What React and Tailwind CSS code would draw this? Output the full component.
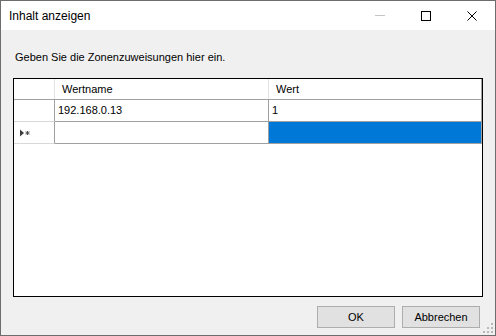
export default function App() {
  return (
    <div
      className="relative w-[496px] h-[336px] flex flex-col border border-[#6d6d6d] bg-[#f0f0f0] text-black"
      style={{ fontFamily: '"Liberation Sans", Arial, sans-serif' }}
    >
      {/* title bar */}
      <div className="h-[29px] bg-white flex items-center shrink-0">
        <span className="pl-[8px] text-[12px] leading-none">Inhalt anzeigen</span>
        <div className="flex-1" />
        <div className="w-[46px] h-full flex items-center justify-center">
          <div className="w-[10px] h-px bg-[#c4c4c4]" />
        </div>
        <div className="w-[46px] h-full flex items-center justify-center">
          <div className="w-[10px] h-[10px] border border-black" />
        </div>
        <div className="w-[46px] h-full flex items-center justify-center">
          <svg width="10" height="10" viewBox="0 0 10 10">
            <path d="M0.5 0.5 L9.5 9.5 M9.5 0.5 L0.5 9.5" stroke="#000" strokeWidth="1" />
          </svg>
        </div>
      </div>

      {/* client area */}
      <div className="flex-1 flex flex-col px-[12px]">
        <div className="mt-[21px] ml-[2px] text-[11px] leading-[13px]">
          Geben Sie die Zonenzuweisungen hier ein.
        </div>

        <div className="mt-[14px] h-[219px] border border-black bg-white flex flex-col">
          <div className="flex h-[21px] border-b border-[#a0a0a0] text-[11px]">
            <div className="w-[41px] border-r border-[#e3e3e3]" />
            <div className="w-[214px] border-r border-[#e3e3e3] flex items-center pl-[7px]">Wertname</div>
            <div className="w-[213px] border-r border-[#a0a0a0] flex items-center pl-[7px]">Wert</div>
          </div>
          <div className="flex h-[22px] text-[11px]">
            <div className="w-[41px] border-r border-b border-r-[#a0a0a0] border-b-[#d8d8d8]" />
            <div className="w-[214px] border-r border-b border-[#a0a0a0] flex items-center pl-[3px]">192.168.0.13</div>
            <div className="w-[213px] border-r border-b border-[#a0a0a0] flex items-center pl-[3px]">1</div>
          </div>
          <div className="flex h-[22px] text-[11px]">
            <div className="w-[41px] border-r border-b border-r-[#a0a0a0] border-b-[#d8d8d8] flex items-center pl-[6px]">
              <svg width="11" height="8" viewBox="0 0 11 8">
                <path d="M0 0.5 L4 4 L0 7.5 Z" fill="#3c3c3c" />
                <path d="M7.5 2 V6 M5.5 4 H9.5 M6 2.5 L9 5.5 M9 2.5 L6 5.5" stroke="#505050" strokeWidth="1" />
              </svg>
            </div>
            <div className="w-[214px] border-r border-b border-[#a0a0a0]" />
            <div className="w-[213px] border-r border-b border-[#a0a0a0] bg-[#0078d7]" />
          </div>
        </div>

        <div className="mt-[9px] flex justify-end gap-[7px] pr-[3px]">
          <button className="w-[78px] h-[22px] bg-[#e1e1e1] border border-[#adadad] text-[11px] flex items-center justify-center">
            OK
          </button>
          <button className="w-[78px] h-[22px] bg-[#e1e1e1] border border-[#adadad] text-[11px] flex items-center justify-center">
            Abbrechen
          </button>
        </div>
      </div>

      {/* size grip */}
      <svg className="absolute right-[1px] bottom-[1px]" width="12" height="12" viewBox="0 0 12 12">
        <rect x="9" y="1" width="2" height="2" fill="#b8b8b8" />
        <rect x="5" y="5" width="2" height="2" fill="#b8b8b8" />
        <rect x="9" y="5" width="2" height="2" fill="#b8b8b8" />
        <rect x="1" y="9" width="2" height="2" fill="#b8b8b8" />
        <rect x="5" y="9" width="2" height="2" fill="#b8b8b8" />
        <rect x="9" y="9" width="2" height="2" fill="#b8b8b8" />
      </svg>
    </div>
  )
}
